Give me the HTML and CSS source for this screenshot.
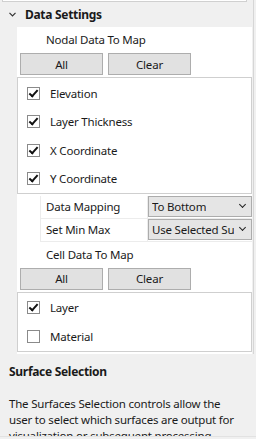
FILE: index.html
```html
<!DOCTYPE html>
<html lang="en">
<head>
  <meta charset="UTF-8" />
  <title>Data Settings</title>
  <link rel="stylesheet" href="styles.css">
</head>
<body>

  <div class="grid">
    <div class="prev-box"></div>

    <div class="cat-head">
      <svg class="chev" width="7" height="5" viewBox="0 0 7 5"><path d="M0.5 0.8 L3.5 3.8 L6.5 0.8" fill="none" stroke="#333" stroke-width="1.2"/></svg>
      <span>Data Settings</span>
    </div>

    <div class="cat-body">
      <div class="section-label">Nodal Data To Map</div>
      <div class="btns">
        <button>All</button>
        <button>Clear</button>
      </div>
      <div class="list">
        <div class="item"><span class="box on"></span>Elevation</div>
        <div class="item"><span class="box on"></span>Layer Thickness</div>
        <div class="item"><span class="box on"></span>X Coordinate</div>
        <div class="item"><span class="box on"></span>Y Coordinate</div>
      </div>

      <div class="prop-row first">
        <div class="prop-name">Data Mapping</div>
        <div class="prop-value"><div class="combo"><span>To Bottom</span></div></div>
      </div>
      <div class="prop-row">
        <div class="prop-name">Set Min Max</div>
        <div class="prop-value"><div class="combo"><span>Use Selected Su</span></div></div>
      </div>

      <div class="section-label">Cell Data To Map</div>
      <div class="btns">
        <button>All</button>
        <button>Clear</button>
      </div>
      <div class="list">
        <div class="item"><span class="box on"></span>Layer</div>
        <div class="item"><span class="box"></span>Material</div>
      </div>
    </div>
  </div>

  <div class="desc">
    <h4>Surface Selection</h4>
    <p>The Surfaces Selection controls allow the user to select which surfaces are output for visualization or subsequent processing.</p>
  </div>

</body>
</html>
```

FILE: styles.css
```css
body {
  margin: 0;
  width: 256px;
  height: 439px;
  overflow: hidden;
  background: #f0f0f0;
  font-family: 'Noto Sans', 'Open Sans', sans-serif;
  font-size: 11.5px;
  letter-spacing: -0.2px;
  color: #1a1a1a;
}
.grid {
  width: 253px;
  border-right: 1px solid #d6d6d6;
  background: #f0f0f0;
}
.prev-box {
  height: 1px;
  margin: 0 6px 0 2px;
  background: #fff;
  border: 1px solid #d0d0d0;
  border-top: none;
}
.cat-head {
  height: 25px;
  display: flex;
  align-items: center;
  font-weight: bold;
  font-size: 12px;
  letter-spacing: -0.3px;
}
.chev {
  margin: 0 9px 0 9px;
}
.cat-body {
  margin-left: 17px;
  margin-right: 1px;
  background: #fff;
  padding-bottom: 2px;
}
.section-label {
  height: 26px;
  line-height: 26px;
  padding-left: 29px;
}
.btns {
  display: flex;
  gap: 5px;
  padding-left: 3px;
  height: 22px;
}
.btns button {
  width: 83px;
  height: 22px;
  background: #e1e1e1;
  border: 1px solid #adadad;
  font-family: inherit;
  font-size: 11.5px;
  letter-spacing: -0.2px;
  color: #1a1a1a;
  padding: 0;
}
.list {
  margin-top: 2px;
  border: 1px solid #cfcfcf;
  padding: 4px 0 3px;
  display: flex;
  flex-direction: column;
  gap: 6.67px;
}
.item {
  height: 22px;
  display: flex;
  align-items: center;
  padding-left: 9px;
}
.box {
  width: 11px;
  height: 11px;
  border: 1px solid #8a8a8a;
  background: #fff;
  margin-right: 10px;
  position: relative;
}
.box.on::after {
  content: "";
  position: absolute;
  left: 3px;
  top: 0px;
  width: 3px;
  height: 7px;
  border: solid #111;
  border-width: 0 2px 2px 0;
  transform: rotate(42deg);
}
.prop-row {
  display: flex;
  height: 22px;
  border-bottom: 1px solid #ececec;
  margin-left: 23px;
  border-left: 1px solid #ececec;
}
.prop-row.first {
  margin-top: 2px;
}
.prop-name {
  width: 106px;
  padding-left: 5px;
  line-height: 22px;
  border-right: 1px solid #ececec;
}
.prop-value {
  flex: 1;
  display: flex;
  align-items: center;
}
.combo {
  width: 102px;
  height: 19px;
  background: #e5e5e5;
  border: 1px solid #acacac;
  display: flex;
  align-items: center;
  position: relative;
  overflow: hidden;
}
.combo span {
  margin-left: 3px;
  max-width: 86px;
  overflow: hidden;
  white-space: nowrap;
}
.combo::after {
  content: "";
  position: absolute;
  right: 6px;
  top: 5px;
  width: 4px;
  height: 4px;
  border: solid #222;
  border-width: 0 1.3px 1.3px 0;
  transform: rotate(45deg);
}
.desc {
  height: 80px;
  overflow: hidden;
  padding: 0 9px;
  margin-top: 2px;
  border-bottom: 1px solid #e2e2e2;
}
.desc h4 {
  margin: 7px 0 0;
  font-size: 12px;
  letter-spacing: -0.3px;
  line-height: 18px;
}
.desc p {
  width: 229px;
  margin: 15px 0 0;
  line-height: 16px;
}
```
